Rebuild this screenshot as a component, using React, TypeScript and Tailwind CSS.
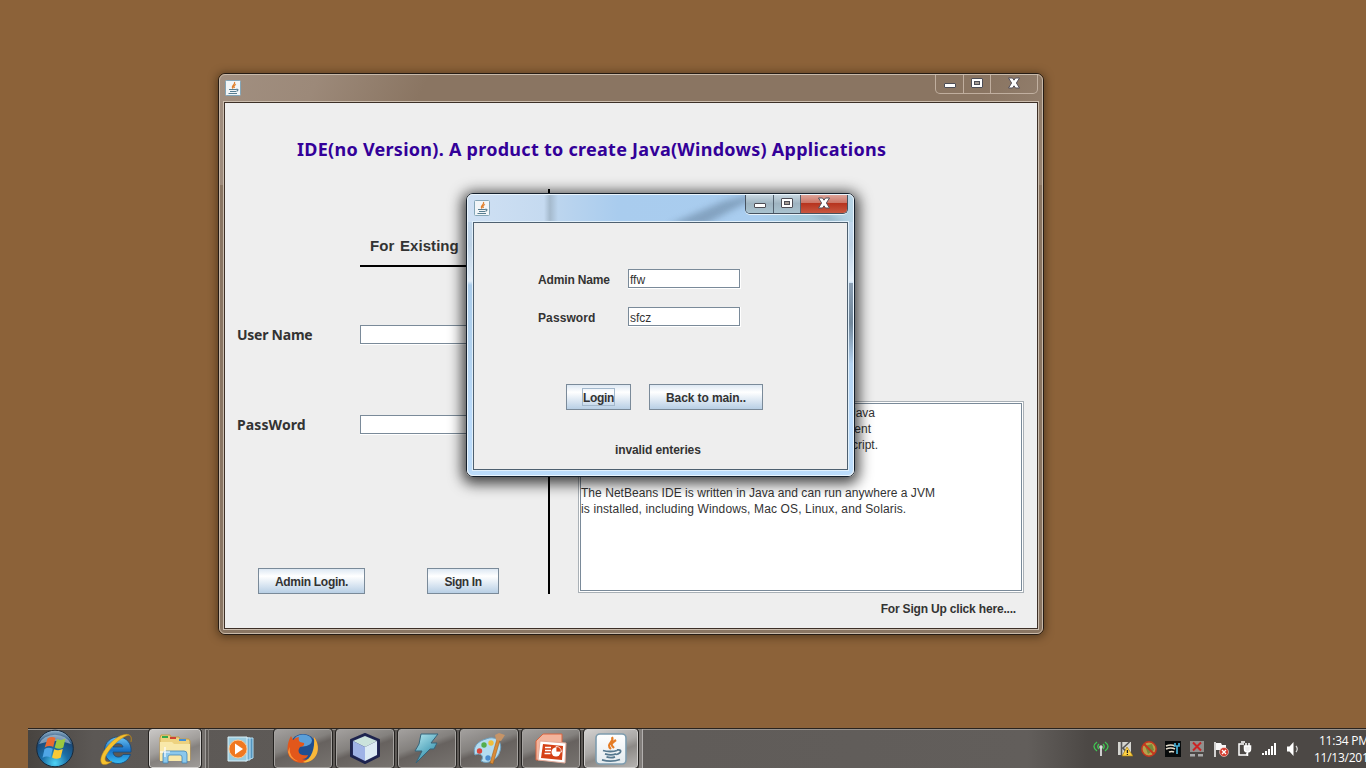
import React from "react";

const JavaCup = ({ size }: { size: number }) => (
  <svg width={size} height={size} viewBox="0 0 32 32" className="shrink-0">
    <defs>
      <linearGradient id="tile" x1="0" y1="0" x2="0" y2="1">
        <stop offset="0" stopColor="#ffffff" />
        <stop offset="1" stopColor="#e3eaee" />
      </linearGradient>
    </defs>
    <rect x="1" y="1" width="30" height="30" rx="4" fill="url(#tile)" stroke="#7d9cae" strokeWidth="1.6" />
    <path d="M17 4c3 5-7 7-1 12M21 7c-6 4-5 5-2 8" fill="none" stroke="#e57c25" strokeWidth="2.2" />
    <path d="M8 17.500c4 1.400 11 1.300 14 0M10 20.800c4 1.300 8 1.200 11 0M11.500 23.800c3 1 6 1 8.500 0M7 26.800c5 1.500 13 1.400 18-.3M22 17c5-1 5 3-1 4.500" fill="none" stroke="#56788e" strokeWidth="1.8" />
  </svg>
);

const SmallCup = () => (
  <svg width="16" height="16" viewBox="0 0 16 16" className="shrink-0">
    <rect x=".5" y=".5" width="15" height="15" rx="1" fill="#f1f5f7" stroke="#84a5b6" />
    <path d="M9.500 2C11 4.500 5.500 5.500 8 8.500M11 4.500C8.500 5.500 8.500 6.500 9.500 8" fill="none" stroke="#e0812e" strokeWidth="1.300" />
    <path d="M4 9.500h7.500M5 11.500h6M11.500 9q3 .2 0 2.500M3.500 13.500h8.500" fill="none" stroke="#577d90" strokeWidth="1.200" />
  </svg>
);

const CloseGlyph = () => (
  <svg width="14" height="12" viewBox="0 0 14 12" className="-mt-px">
    <path d="M1.500 1h4L7 3.200 8.500 1h4L9.400 6l3.100 5h-4L7 8.800 5.500 11h-4l3.100-5z" fill="#fff" stroke="#55505a" strokeWidth="1" />
  </svg>
);
const MinGlyph = () => (
  <svg width="14" height="12" viewBox="0 0 14 12">
    <rect x="1.500" y="5.500" width="11" height="4" rx=".5" fill="#fff" stroke="#4d4d55" />
  </svg>
);
const MaxGlyph = () => (
  <svg width="14" height="12" viewBox="0 0 14 12" className="-mt-px">
    <rect x="1.500" y="1.500" width="11" height="9" rx=".5" fill="#fff" stroke="#4d4d55" />
    <rect x="4.500" y="4.500" width="5" height="3" fill="#a39a92" stroke="#4d4d55" />
  </svg>
);

const Btn = ({ children, className, focus }: { children: React.ReactNode; className: string; focus?: boolean }) => (
  <button
    className={
      "flex h-[26px] items-center justify-center border border-[#7a8a99] bg-linear-to-b from-[#dde8f3] via-[#ffffff] via-30% to-[#b8cfe5] text-[12px] font-bold whitespace-nowrap " +
      className
    }
  >
    <span className={focus ? "flex h-[18px] w-[33px] items-center justify-center border border-[#a3b8cc] pt-[2px]" : "pt-[2px]"}>{children}</span>
  </button>
);

const Field = ({ className, value }: { className: string; value?: string }) => (
  <div className={"h-[20px] border-r border-b border-white " + className}>
    <div className="flex h-[19px] items-center border border-[#7a8a99] bg-white pt-[2px] pl-px text-[12px]">{value}</div>
  </div>
);

function MainWindow() {
  return (
    <section className="absolute top-[73px] left-[218px] h-[562px] w-[826px] rounded-[7px] border border-[#261c14] shadow-[0_1px_9px_1px_rgba(30,20,5,0.5)]">
      <div className="flex h-full flex-col rounded-[6px] border border-[#c8b9a9] bg-[#8a7663] bg-[linear-gradient(115deg,#a18f80_0,#9c8979_90px,#8a7562_190px,#8a7562_700px,#a08e7e_860px,#8c7866_1000px)] bg-[length:100%_110px] bg-no-repeat px-[3px] pb-[3px]">
        <header className="flex h-[26px] items-start justify-between pr-px pl-[2px]">
          <div className="pt-[5px]"><SmallCup /></div>
          <div className="-mt-px flex h-[20px] w-[103px] rounded-b-[5px] border border-t-0 border-[#cdbdae]/80">
            <span className="flex w-[28px] items-center justify-center border-r border-[#cdbdae]/80"><MinGlyph /></span>
            <span className="flex w-[27px] items-center justify-center border-r border-[#cdbdae]/80"><MaxGlyph /></span>
            <span className="flex flex-1 items-center justify-center"><CloseGlyph /></span>
          </div>
        </header>
        <div className="flex-1 border border-[#cbbdae]">
          <main className="flex h-full flex-col border border-[#3d3027] bg-[#eeeeee]">
            <h1 className="h-[86px] pt-[34px] pl-[72px] font-['Noto_Sans'] text-[18px] leading-[24px] font-bold tracking-[0.27px] whitespace-nowrap text-[#330099]">
              IDE(no Version). A product to create Java(Windows) Applications
            </h1>
            <div className="flex flex-1">
              <div className="flex w-[323px] flex-col">
                <h2 className="mt-[42px] ml-[135px] h-[36px] w-[160px] border-b-2 border-black pl-[10px] text-[15px] leading-[30px] font-bold tracking-[0.05px] whitespace-nowrap [word-spacing:1.5px]">
                  For Existing
                </h2>
                <div className="mt-[58px] flex h-[20px] items-center">
                  <label className="w-[135px] pl-[12px] font-['Noto_Sans'] text-[14px] leading-[20px] font-bold tracking-[-0.25px]">User Name</label>
                  <Field className="w-[150px]" />
                </div>
                <div className="mt-[70px] flex h-[20px] items-center">
                  <label className="w-[135px] pl-[12px] font-['Noto_Sans'] text-[14px] leading-[20px] font-bold tracking-[0.1px]">PassWord</label>
                  <Field className="w-[150px]" />
                </div>
                <div className="mt-[133px] flex gap-[62px] pl-[33px]">
                  <Btn className="w-[107px] tracking-[-0.3px]">Admin Login.</Btn>
                  <Btn className="w-[72px] tracking-[-0.4px]">Sign In</Btn>
                </div>
              </div>
              <div className="h-[405px] w-[2px] bg-black" />
              <div className="flex flex-1 flex-col pt-[212px] pl-[28px]">
                <div className="h-[192px] w-[446px] border border-[#a9b0b6] bg-white p-px">
                  <div className="h-full border border-[#7a8a99] bg-white pt-px text-[12px] leading-[16px] whitespace-nowrap">
                    <p className="w-[294px] text-right">Java</p>
                    <p className="w-[290px] text-right">ment</p>
                    <p className="w-[297px] text-right">Script.</p>
                    <p className="mt-[32px] tracking-[0.04px]">The NetBeans IDE is written in Java and can run anywhere a JVM</p>
                    <p className="tracking-[0.13px]">is installed, including Windows, Mac OS, Linux, and Solaris.</p>
                  </div>
                </div>
                <a className="mt-[8px] mr-[21px] self-end text-[12px] leading-[16px] font-bold tracking-[-0.18px] whitespace-nowrap">For Sign Up click here....</a>
              </div>
            </div>
          </main>
        </div>
      </div>
    </section>
  );
}

function LoginDialog() {
  return (
    <section className="absolute top-[193px] left-[466px] h-[284px] w-[389px] rounded-[7px] border border-[#15202c] shadow-[0_3px_14px_4px_rgba(0,0,0,0.72)]">
      <div className="relative flex h-full flex-col overflow-hidden rounded-[6px] border border-[#eaf5fd] bg-[linear-gradient(180deg,#c3dbf2_0,#bdd2e6_50px,#e2edf8_86px,#a9cbea_90px,#b2d2ef_160px,#badafa_220px,#bcdcfa_282px)] px-[4px] pb-[4px]">
        <div className="absolute top-0 left-0 h-[27px] w-[387px] bg-[linear-gradient(90deg,#cfe0f3_0,#c5daf0_76px,#a5bacd_82px,#bcd5ee_90px,#a9ccee_150px,#a9cdef_290px,#a3cadd_330px,#b8d4e5_387px)]" />
        <svg className="absolute top-0 left-[190px]" width="197" height="27" viewBox="0 0 197 27">
          <defs><filter id="soft"><feGaussianBlur stdDeviation="3" /></filter></defs>
          <path d="M10 30L66 6l50-12-40 20-30 16z" fill="#6f8ca8" opacity=".65" filter="url(#soft)" />
          <path d="M148 18l20 1 22 10-20-2z" fill="#7795ab" opacity=".5" filter="url(#soft)" />
        </svg>
        <div className="absolute top-[88px] right-0 h-[80px] w-[5px] bg-linear-to-b from-[#8b9fb4] via-[#71879a] to-[#b3d1ee]" />
        <header className="relative flex h-[26px] items-start justify-between pr-0 pl-[2px]">
          <div className="pt-[5px]"><SmallCup /></div>
          <div className="-mt-px mr-px flex h-[20px] w-[103px] overflow-hidden rounded-b-[5px] border border-t-0 border-[#46525f] shadow-[0_1px_0_#e8f3fa]">
            <span className="flex w-[28px] items-center justify-center border-r border-[#53616f] bg-linear-to-b from-[#cbdae4] via-[#9fb4c1] to-[#a9c3cf]"><MinGlyph /></span>
            <span className="flex w-[27px] items-center justify-center border-r border-[#53616f] bg-linear-to-b from-[#cbdae4] via-[#9fb4c1] to-[#a9c3cf]"><MaxGlyph /></span>
            <span className="flex flex-1 items-center justify-center bg-[linear-gradient(180deg,#e0aaa0_0,#cd7768_45%,#b7341f_50%,#c85740_100%)]"><CloseGlyph /></span>
          </div>
        </header>
        <div className="relative flex-1 border border-[#e1f0fb]">
          <form className="flex h-full flex-col border border-[#4e6070] bg-[#eeeeee] pt-[46px] text-[12px]">
            <div className="flex h-[20px] items-center pl-[64px]">
              <label className="w-[90px] pt-[2px] leading-[18px] font-bold tracking-[-0.15px]">Admin Name</label>
              <Field className="w-[113px]" value="ffw" />
            </div>
            <div className="mt-[18px] flex h-[20px] items-center pl-[64px]">
              <label className="w-[90px] pt-[2px] leading-[18px] font-bold tracking-[0.1px]">Password</label>
              <Field className="w-[113px]" value="sfcz" />
            </div>
            <div className="mt-[57px] flex gap-[18px] pl-[92px]">
              <Btn className="w-[65px] tracking-[-0.3px]" focus>Login</Btn>
              <Btn className="w-[114px] tracking-[-0.1px]">Back to main..</Btn>
            </div>
            <p className="mt-[32px] pl-[141px] leading-[16px] font-bold tracking-[-0.1px]">invalid enteries</p>
          </form>
        </div>
      </div>
    </section>
  );
}

const Task = ({ children, active }: { children: React.ReactNode; active?: boolean }) => (
  <div
    className={
      "flex h-[39px] shrink-0 items-center justify-center rounded-[3px] border outline outline-[#242220] " +
      (active
        ? "w-[54px] border-[#d0cecc] bg-[linear-gradient(160deg,#d2d0cf_0,#aaa8a6_45%,#8c8986_60%,#b5b3b1_100%)]"
        : "w-[58px] border-[#a5a29f] bg-[linear-gradient(160deg,#a3a09e_0,#84817e_40%,#67625f_52%,#77736f_100%)]")
    }
  >
    {children}
  </div>
);

const StartOrb = () => (
  <svg width="40" height="39" viewBox="0 0 40 39">
    <defs>
      <radialGradient id="orb" cx=".5" cy=".9" r=".9">
        <stop offset="0" stopColor="#4fd4f6" /><stop offset=".4" stopColor="#1b6ea6" /><stop offset=".75" stopColor="#1b4a78" /><stop offset="1" stopColor="#9cb9cf" />
      </radialGradient>
    </defs>
    <circle cx="20" cy="19.500" r="18.300" fill="url(#orb)" stroke="#17293b" />
    <path d="M4 15a17 14 0 0 1 32 0q-15-6-32 0z" fill="#c9dbe8" opacity=".55" />
    <path d="M12.500 9.500q4-2.500 8-.5l-2.300 9q-4-2-8.500.5z" fill="#ea6a31" />
    <path d="M22 10q4 2 8.500-.5l-2.200 9q-4 2.500-8.600 0z" fill="#9cc940" />
    <path d="M9.500 20q4-2.500 8.300-.3L15.500 28.500q-4-2-8 .3z" fill="#4fa6e6" />
    <path d="M19.200 20.300q4 2 8.600-.2l-2.200 8.700q-4.600 2-8.600-.3z" fill="#fbc936" />
  </svg>
);
const IE = () => (
  <svg width="34" height="34" viewBox="0 0 34 34">
    <defs><linearGradient id="ie" x1="0" y1="0" x2="0" y2="1"><stop offset="0" stopColor="#6cc4f4" /><stop offset=".5" stopColor="#1970c4" /><stop offset="1" stopColor="#38bdf3" /></linearGradient></defs>
    <path fillRule="evenodd" d="M31 20H13c.5 6 8 6.500 10 2.500h7.500C28 29 23 31.500 18 31.500 10 31.500 4.500 25.500 4.500 18S11 5 18 5c8.500 0 14 6.500 13 15zM13 15h10c-.5-4.500-9-4.500-10 0z" fill="url(#ie)" stroke="#124a80" strokeWidth=".8" />
    <path d="M31 10C33 2 27 0 18 5 8 11 -1 24 1 30c1 4 6 3 11-.5-6 1.500-8.500-.5-6-6C10 16 19 7 26 4c4-2 6 0 5 6z" fill="#f5c12e" stroke="#bb8718" strokeWidth=".5" />
  </svg>
);
const Explorer = () => (
  <svg width="34" height="32" viewBox="0 0 34 32">
    <path d="M2 5l1-3h9l1 2h8l1 2h9l1 2v19H2z" fill="#edd27f" stroke="#c39c4b" />
    <path d="M4 3h6v2H4z" fill="#35aa4b" /><path d="M12 4h6v2h-6z" fill="#cf4132" /><path d="M21 6h7v2h-7z" fill="#4390d6" />
    <path d="M2 9h12l2 2h16v17H2z" fill="#f8e8a9" />
    <path d="M5 30V21q0-3 3-3h18q3 0 3 3v9h-5v-6q0-2-2-2H12q-2 0-2 2v6z" fill="#8bc8ec" stroke="#4586b5" strokeWidth=".8" />
    <path d="M7 14v10M2 19h10" stroke="#fff" strokeWidth="1.200" />
  </svg>
);
const Player = () => (
  <svg width="28" height="28" viewBox="0 0 28 28">
    <path d="M12 3h14v20l-8 3z" fill="#5394be" stroke="#b3def3" /><path d="M8 3h15v22H8z" fill="#70add2" stroke="#c0e2f3" />
    <path d="M1 2h19v24H1z" fill="#9accdf" stroke="#d9eff7" />
    <circle cx="11" cy="14" r="9" fill="#f07821" stroke="#fbc692" /><path d="M8 8.500v11l8-5.500z" fill="#fff" />
  </svg>
);
const Firefox = () => (
  <svg width="34" height="33" viewBox="0 0 34 33">
    <circle cx="17" cy="15.500" r="13.500" fill="#1f4f90" /><ellipse cx="17" cy="8.500" rx="9" ry="6" fill="#5b9fd8" />
    <path d="M28 5c5 6 5 17-1 22C20 33 8 32 3 24 0 17 2 9 5 4l2 4q3-3 6-3-1 3 1 5l4 1q1 3-4 4-3 4 0 7 3 2 8 1-1 4-6 4 6 2 10-2 5-6 2-20z" fill="#e2571b" />
    <path d="M28 5c6 8 5 18-2 23-3 2-7 3-9 2 9-3 12-14 11-25z" fill="#f9b93a" />
    <path d="M3.500 15q-.5 11 9 14.500Q4 28 2 20z" fill="#fa983c" />
  </svg>
);
const NetBeans = () => (
  <svg width="32" height="33" viewBox="0 0 32 33">
    <path d="M16 2l14 6v16l-14 7L2 24V8z" fill="#23295b" stroke="#1e244d" strokeWidth="2" strokeLinejoin="round" />
    <path d="M16 4l12 5-12 6L4 9z" fill="#cbe3dc" /><path d="M4 9l12 6v14L4 23z" fill="#9fb3e6" /><path d="M16 15l12-6v14l-12 6z" fill="#dcebf4" />
  </svg>
);
const Bolt = () => (
  <svg width="32" height="33" viewBox="0 0 32 33">
    <defs><linearGradient id="bt" x1="0" y1="0" x2=".6" y2="1"><stop stopColor="#b4e7ef" /><stop offset="1" stopColor="#2b8aa8" /></linearGradient></defs>
    <path d="M10 2h17l-7 9h6l-3 6h-4L5 31l6-12H4l4-7z" fill="url(#bt)" stroke="#36647a" />
  </svg>
);
const Paint = () => (
  <svg width="34" height="34" viewBox="0 0 34 34">
    <path d="M14 7C24 3 31 10 28 19c-2 9-13 14-19 10 4-5-1-9-6-6C0 15 6 9 14 7z" fill="#b4dcf0" stroke="#6c9fbe" />
    <circle cx="7.500" cy="19" r="2.700" fill="#d9463c" /><circle cx="12" cy="13" r="2.700" fill="#54ae4d" /><circle cx="19" cy="11" r="2.700" fill="#efbe3b" /><circle cx="16" cy="26" r="2.700" fill="#4c8ed0" />
    <path d="M28 8L21 32l-3-1 7-24z" fill="#d98b38" stroke="#945919" strokeWidth=".5" /><path d="M24 8L23 3l4-2 6 2-4 6z" fill="#c69467" />
  </svg>
);
const PowerPoint = () => (
  <svg width="34" height="33" viewBox="0 0 34 33">
    <path d="M9 2h19v26H2V9z" fill="#f3b49c" stroke="#d86540" />
    <path d="M6 9l26 2-1 20-27-3z" fill="#fff" stroke="#e3aa99" /><path d="M9 12l20 2-1 14-21-2z" fill="#d54117" />
    <path d="M11 15.500h6M11 18.500h6M10.500 21.500h6" stroke="#fff" strokeWidth="1.600" />
    <circle cx="22" cy="20" r="4.500" fill="#fff" /><path d="M22 20v-5.500q5 0 5.500 5.500z" fill="#d54117" stroke="#fff" strokeWidth=".8" />
  </svg>
);

const trayArt: React.ReactNode[] = [
  <g key="a" fill="none" stroke="#40c552" strokeWidth="1.400"><path d="M4 1Q-2 5.500 4 10M12 1q6 4.500 0 9M6 3Q3.500 5.500 6 8M10 3q2.500 2.500 0 5" /><path d="M8 6v9" stroke="#ddd" strokeWidth="1.800" /><circle cx="8" cy="6" r="1" stroke="#ddd" /></g>,
  <g key="b"><path d="M1 1h13v13H1z" fill="#d5d5d0" /><path d="M4.500 1v13M12.500 1L6 7l5 6" stroke="#555" strokeWidth="1.600" fill="none" /><path d="M10 6l6 9H5z" fill="#ffd143" stroke="#a57e13" strokeWidth=".7" /><path d="M10.400 9v3m0 1v1" stroke="#222" strokeWidth="1.300" /></g>,
  <g key="c"><circle cx="8" cy="8" r="7" fill="#b9a04c" /><path d="M4 5l7-2 2 6-6 4z" fill="#768a3c" /><circle cx="8" cy="8" r="7.200" fill="none" stroke="#c6361e" strokeWidth="1.500" /><path d="M3 3l10 10" stroke="#c6361e" strokeWidth="2" /></g>,
  <g key="d"><path d="M0 0h16v16H0z" fill="#080b0c" /><path d="M1 5q5-2 9 0M1 8q5-2 9 0M4 11q3-1 5 0" stroke="#e4ddcb" strokeWidth="1.600" fill="none" /><path d="M10 2v3h4V2M12 5v8" stroke="#43aed5" strokeWidth="1.700" fill="none" /></g>,
  <g key="e"><path d="M1 0h14v11H1z" fill="#918f8d" /><path d="M4 1.500l8 8M12 1.500l-8 8" stroke="#cc2424" strokeWidth="2" /><path d="M1 13h5v2.500H1zM9 13h5v2.500H9z" fill="#aaa" /></g>,
  <g key="f"><path d="M2 1v15" stroke="#fff" strokeWidth="1.500" /><path d="M3 2h5l1 2h4v7H9L8 9H3z" fill="#f7f7f7" /><circle cx="11" cy="11" r="4.500" fill="#d43a2c" stroke="#fff" strokeWidth=".5" /><path d="M9 9l4 4m0-4l-4 4" stroke="#fff" strokeWidth="1.300" /></g>,
  <g key="g" fill="none" stroke="#fff" strokeWidth="1.500"><path d="M7 3H2v11h8v-2M4 1h4" /><path d="M7.500 5h6v3q0 3-3 3t-3-3zM9 2v3M12 2v3M10.500 11v4" fill="#eee" /></g>,
  <g key="h" fill="#fff"><path d="M1 12h2v2H1zM4 10h2v4H4zM7 8h2v6H7zM10 5h2v9h-2zM13 2h2v12h-2z" /></g>,
  <g key="i"><path d="M2 5.500h2.500L8.500 1v14l-4-4.500H2z" fill="#fff" /><path d="M11 5q2.500 3 0 6" fill="none" stroke="#ddd" strokeWidth="1.200" /></g>,
];

function Taskbar() {
  return (
    <footer className="absolute top-[728px] left-[28px] flex h-[40px] w-[1338px] items-start overflow-hidden border-t border-[#29231f] bg-[linear-gradient(90deg,#484440_0,#5c5855_65px,#5d5956_130px,#625e5b_1000px,#4c4845_1060px)] font-['Open_Sans'] text-white shadow-[inset_0_1px_0_#97928d]">
      <div className="flex h-[39px] w-[121px] items-center pl-[7px]">
        <StartOrb />
        <div className="ml-[25px]"><IE /></div>
      </div>
      <div className="flex h-[39px] w-[52px] items-center justify-center rounded-[3px] border border-[#d1cfcd] bg-[linear-gradient(160deg,#c9c7c5_0,#a19e9b_45%,#85817e_60%,#9f9c99_100%)] outline outline-[#242220]"><Explorer /></div>
      <div className="ml-px h-[39px] w-[4px] border-r border-[#a19e9b] bg-[#726e6b]" />
      <div className="h-[39px] w-[3px] border-r border-[#86827e]" />
      <div className="flex h-[39px] w-[64px] items-center justify-center"><Player /></div>
      <div className="flex gap-[4px] pl-px">
        <Task><Firefox /></Task>
        <Task><NetBeans /></Task>
        <Task><Bolt /></Task>
        <Task><Paint /></Task>
        <Task><PowerPoint /></Task>
        <Task active><JavaCup size={32} /></Task>
      </div>
      <div className="ml-px h-[39px] w-[4px] border-r border-[#b3b0ae] bg-[#827e7b]" />
      <div className="ml-auto flex h-[39px] items-center gap-[8px]">
        {trayArt.map((art, i) => (
          <svg key={i} width="16" height="16" viewBox="0 0 16 16">{art}</svg>
        ))}
      </div>
      <div className="ml-[13px] w-[52px] pt-[3px] text-[12px] leading-[17px] tracking-[-0.25px] whitespace-nowrap">
        <p className="pl-[5px]">11:34 PM</p>
        <p>11/13/201</p>
      </div>
    </footer>
  );
}

export default function App() {
  return (
    <div className="relative h-[768px] w-[1366px] overflow-hidden bg-[#8c6239] font-['Liberation_Sans',sans-serif] text-[#333333]">
      <MainWindow />
      <LoginDialog />
      <Taskbar />
    </div>
  );
}
